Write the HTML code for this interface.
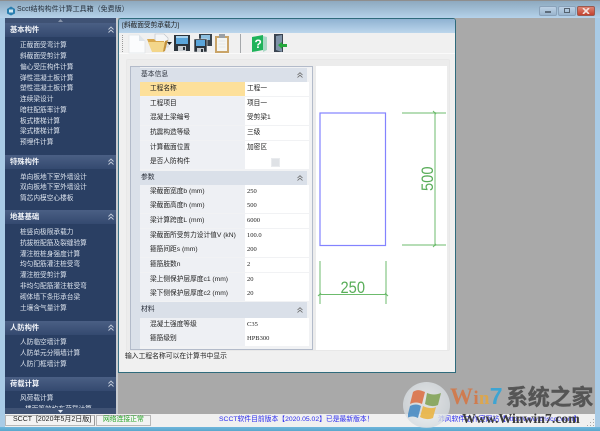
<!DOCTYPE html>
<html><head><meta charset="utf-8">
<style>
html,body{margin:0;padding:0;background:#a9cbe6}
body{width:600px;height:431px;position:relative;overflow:hidden;font-family:"Liberation Sans","Noto Sans CJK SC",sans-serif;}
#w{left:0;top:0;width:600px;height:431px;overflow:hidden;background:#a9cbe6;filter:blur(.3px)}
div{position:absolute;box-sizing:border-box}
.t{white-space:nowrap;line-height:10px;height:10px}
.s{color:#dde4ee;font-size:6.7px;left:20px}
.h{left:5px;width:111px;height:14px;background:linear-gradient(#4a5f84,#34496f);}
.h b{position:absolute;left:5px;top:2px;font-size:7.3px;line-height:10px;color:#f0f3f8;font-weight:bold}
.h svg{position:absolute;left:103px;top:3px}
.sec{left:131px;width:176px;height:14px;background:#dae0e9;}
.sec span{position:absolute;left:10px;top:2px;font-size:6.8px;line-height:10px;color:#2a2f3a}
.sec svg{position:absolute;left:166px;top:4px}
.r{left:140px;width:167px;height:14px;background:#eef0f4}
.r i{position:absolute;left:10px;top:2px;font-style:normal;font-size:6.7px;line-height:10px;color:#222;white-space:nowrap}
.r u{position:absolute;left:105px;top:0;width:62px;height:14px;background:#fff;text-decoration:none;font-size:6.7px;line-height:14px;color:#222;padding-left:2px;white-space:nowrap}
.r u.n{font-family:"Liberation Serif",serif;font-size:6.5px}
</style></head><body><div id="w">

<!-- main title bar -->
<div style="left:0;top:0;width:600px;height:18px;background:linear-gradient(#8ea9bf 0,#9cb9d0 40%,#b5d2ea 100%);border-top:1px solid #8e8e8e"></div>
<svg style="position:absolute;left:6px;top:6px" width="10" height="10" viewBox="0 0 10 10"><path d="M5 .5L9 3v4.500L5 9.500 1 7.500V3z" fill="#2a7fb0"/><path d="M3 3.500h4v3H3z" fill="#cfe6f2"/></svg>
<div class="t" style="left:17px;top:5px;font-size:7px;color:#26303c">Scct结构构件计算工具箱（免费版）</div>
<!-- window buttons -->
<div style="left:539px;top:6px;width:18px;height:10px;background:linear-gradient(#bdd2e6,#9ab5ce);border:1px solid #8aa2ba;border-radius:2px"></div>
<div style="left:545px;top:11px;width:6px;height:2px;background:#5d6c7c"></div>
<div style="left:558px;top:6px;width:18px;height:10px;background:linear-gradient(#bdd2e6,#9ab5ce);border:1px solid #8aa2ba;border-radius:2px"></div>
<div style="left:564px;top:8px;width:6px;height:5px;border:1px solid #55626f"></div>
<div style="left:577px;top:6px;width:18px;height:10px;background:linear-gradient(#dd8474,#c4422f);border:1px solid #9a5a50;border-radius:2px"></div>
<svg style="position:absolute;left:582px;top:8px" width="8" height="6"><path d="M1 0l6 6M7 0L1 6" stroke="#f4e4e0" stroke-width="1.600"/></svg>

<!-- MDI -->
<div style="left:5px;top:18px;width:590px;height:396px;background:#a9a9a9"></div>
<div style="left:116px;top:18px;width:2px;height:396px;background:#c9ccd0"></div>

<!-- sidebar -->
<div style="left:5px;top:18px;width:111px;height:396px;background:#2a3f63"></div>
<div style="left:5px;top:18px;width:111px;height:5px;background:#3f5274"></div>
<svg style="position:absolute;left:58px;top:19px" width="5" height="3"><path d="M0 3l2.500-3L5 3z" fill="#8794aa"/></svg>

<div class="h" style="top:23px"><b>基本构件</b><svg width="6" height="7"><path d="M.5 3.500L3 1l2.500 2.500M.5 6.500L3 4l2.500 2.500" fill="none" stroke="#c3ccda" stroke-width=".9"/></svg></div>
<div class="t s" style="top:41px">正截面受弯计算</div>
<div class="t s" style="top:52px">斜截面受剪计算</div>
<div class="t s" style="top:63px">偏心受压构件计算</div>
<div class="t s" style="top:74px">弹性混凝土板计算</div>
<div class="t s" style="top:84px">塑性混凝土板计算</div>
<div class="t s" style="top:95px">连续梁设计</div>
<div class="t s" style="top:106px">暗柱配筋率计算</div>
<div class="t s" style="top:117px">板式楼梯计算</div>
<div class="t s" style="top:127px">梁式楼梯计算</div>
<div class="t s" style="top:138px">预埋件计算</div>

<div class="h" style="top:155px"><b>特殊构件</b><svg width="6" height="7"><path d="M.5 3.500L3 1l2.500 2.500M.5 6.500L3 4l2.500 2.500" fill="none" stroke="#c3ccda" stroke-width=".9"/></svg></div>
<div class="t s" style="top:173px">单向板地下室外墙设计</div>
<div class="t s" style="top:183px">双向板地下室外墙设计</div>
<div class="t s" style="top:194px">筒芯内模空心楼板</div>

<div class="h" style="top:210px"><b>地基基础</b><svg width="6" height="7"><path d="M.5 3.500L3 1l2.500 2.500M.5 6.500L3 4l2.500 2.500" fill="none" stroke="#c3ccda" stroke-width=".9"/></svg></div>
<div class="t s" style="top:228px">桩竖向极限承载力</div>
<div class="t s" style="top:239px">抗拔桩配筋及裂缝验算</div>
<div class="t s" style="top:250px">灌注桩桩身强度计算</div>
<div class="t s" style="top:260px">均匀配筋灌注桩受弯</div>
<div class="t s" style="top:271px">灌注桩受剪计算</div>
<div class="t s" style="top:282px">非均匀配筋灌注桩受弯</div>
<div class="t s" style="top:293px">砌体墙下条形承台梁</div>
<div class="t s" style="top:304px">土壤含气量计算</div>

<div class="h" style="top:321px"><b>人防构件</b><svg width="6" height="7"><path d="M.5 3.500L3 1l2.500 2.500M.5 6.500L3 4l2.500 2.500" fill="none" stroke="#c3ccda" stroke-width=".9"/></svg></div>
<div class="t s" style="top:338px">人防临空墙计算</div>
<div class="t s" style="top:349px">人防单元分隔墙计算</div>
<div class="t s" style="top:360px">人防门框墙计算</div>

<div class="h" style="top:377px"><b>荷载计算</b><svg width="6" height="7"><path d="M.5 3.500L3 1l2.500 2.500M.5 6.500L3 4l2.500 2.500" fill="none" stroke="#c3ccda" stroke-width=".9"/></svg></div>
<div class="t s" style="top:394px">风荷载计算</div>
<div style="left:5px;top:404px;width:111px;height:4px;overflow:hidden"><div class="t s" style="top:1px">楼面等效均布荷载计算</div></div>
<div style="left:5px;top:408px;width:111px;height:6px;background:#3f5274"></div>
<svg style="position:absolute;left:58px;top:410px" width="5" height="3"><path d="M0 0l2.500 3L5 0z" fill="#dfe5ee"/></svg>

<!-- child window -->
<div style="left:118px;top:18px;width:338px;height:355px;background:#f0f0f0;border:1px solid #2f6b7c;border-left-color:#3d7386;border-radius:3px 3px 0 0"></div>
<div style="left:119px;top:19px;width:336px;height:14px;background:linear-gradient(#8fb2d2,#bcd6ec);border-radius:2px 2px 0 0"></div>
<div class="t" style="left:122px;top:21px;font-size:6.7px;color:#222">[斜截面受剪承载力]</div>
<div style="left:119px;top:33px;width:336px;height:21px;background:#f0f0f0"></div>
<div style="left:119px;top:53px;width:336px;height:1px;background:#fafafa"></div>

<!-- toolbar icons -->
<div style="left:122px;top:35px;width:1px;height:17px;border-left:1px dotted #9a9a9a"></div>
<svg style="position:absolute;left:127px;top:33px" width="20" height="21" viewBox="0 0 20 21"><path d="M2 2h10l6 6v12H2z" fill="#fbfcfd" stroke="#e0e4e8" stroke-width=".8"/><path d="M12 2v6h6z" fill="#dfe5ea"/></svg>
<svg style="position:absolute;left:146px;top:33px" width="26" height="20" viewBox="0 0 26 20"><path d="M9 1h9l4 4v9H9z" fill="#f4f6f8" stroke="#b9bfc5" stroke-width=".6"/><path d="M1 6h7l2 2h8v10H6z" fill="#d9a84c"/><path d="M2 9h17l-2 10H6z" fill="#f3d68a"/><path d="M19 8l3-1-3 11-2 1z" fill="#c2923e"/></svg>
<svg style="position:absolute;left:167px;top:42px" width="5" height="4"><path d="M0 0h5L2.500 3z" fill="#222"/></svg>
<svg style="position:absolute;left:174px;top:35px" width="16" height="16" viewBox="0 0 16 16"><path d="M0 0h16v16H0z" fill="#2c343c"/><path d="M2 1h12v8H2z" fill="#5aa5da"/><path d="M2 1h12v2H2z" fill="#a9d3ee"/><path d="M4 11h8v5H4z" fill="#c7ccd0"/><path d="M9 12h2v3H9z" fill="#2c343c"/></svg>
<svg style="position:absolute;left:194px;top:34px" width="18" height="18" viewBox="0 0 18 18"><path d="M5 0h13v12H5z" fill="#39434c"/><path d="M7 1h9v5H7z" fill="#8cbfe0"/><path d="M0 5h13v13H0z" fill="#2c343c" stroke="#eee" stroke-width=".6"/><path d="M2 6h9v6H2z" fill="#5aa5da"/><path d="M3 14h7v4H3z" fill="#c7ccd0"/><path d="M7 15h2v3H7z" fill="#2c343c"/></svg>
<svg style="position:absolute;left:215px;top:34px" width="14" height="19" viewBox="0 0 14 19"><path d="M0 2h14v17H0z" fill="#c9a468"/><path d="M2 4h10v13H2z" fill="#f4f5f2"/><path d="M4 0h6v4H4z" fill="#9aa0a6"/><path d="M3.500 7h7M3.500 10h7M3.500 13h7" stroke="#dfe2e2" stroke-width=".8"/></svg>
<div style="left:240px;top:34px;width:1px;height:19px;background:#a5a8ab"></div>
<svg style="position:absolute;left:251px;top:34px" width="17" height="19" viewBox="0 0 17 19"><path d="M12 2l4 1v13l-4 2z" fill="#a9d8c5"/><path d="M1 3l11-2v15L1 18z" fill="#1fb35a"/><text x="3.500" y="14" font-family="Liberation Sans" font-weight="bold" font-size="12" fill="#fff">?</text></svg>
<svg style="position:absolute;left:273px;top:34px" width="16" height="19" viewBox="0 0 16 19"><path d="M1 0h9v18H1z" fill="#3a4450"/><path d="M3 2l6-1v17l-6-2z" fill="#7f93a8"/><path d="M5 11l4-3v2h5v3H9v2z" fill="#25a83c"/></svg>

<!-- panels -->
<div style="left:126px;top:59px;width:324px;height:292px;background:#ececec;border:1px solid #e8e8e8;border-radius:2px"></div>
<div style="left:130px;top:66px;width:183px;height:284px;background:#f1f2f4;border:1px solid #b3bbca"></div>
<div style="left:131px;top:67px;width:9px;height:282px;background:#dae0e9"></div>
<div style="left:316px;top:66px;width:131px;height:284px;background:#fff"></div>

<!-- grid -->
<div class="sec" style="top:68px"><span>基本信息</span><svg width="6" height="6"><path d="M.5 3L3 .7 5.500 3M.5 5.500L3 3.200 5.500 5.500" fill="none" stroke="#666" stroke-width=".8"/></svg></div>
<div class="r" style="top:82px;background:#fde09a"><i>工程名称</i><u>工程一</u></div>
<div class="r" style="top:97px"><i>工程项目</i><u>项目一</u></div>
<div class="r" style="top:111px"><i>混凝土梁编号</i><u>受剪梁1</u></div>
<div class="r" style="top:126px"><i>抗震构造等级</i><u>三级</u></div>
<div class="r" style="top:141px"><i>计算截面位置</i><u>加密区</u></div>
<div class="r" style="top:155px"><i>是否人防构件</i><u></u></div>
<div style="left:271px;top:158px;width:9px;height:9px;background:#dfe2e6;border:1px solid #e9ebee"></div>
<div class="sec" style="top:171px"><span>参数</span><svg width="6" height="6"><path d="M.5 3L3 .7 5.500 3M.5 5.500L3 3.200 5.500 5.500" fill="none" stroke="#666" stroke-width=".8"/></svg></div>
<div class="r" style="top:185px"><i>梁截面宽度b (mm)</i><u class="n">250</u></div>
<div class="r" style="top:199px"><i>梁截面高度h (mm)</i><u class="n">500</u></div>
<div class="r" style="top:214px"><i>梁计算跨度L (mm)</i><u class="n">6000</u></div>
<div class="r" style="top:229px"><i>梁截面所受剪力设计值V (kN)</i><u class="n">100.0</u></div>
<div class="r" style="top:243px"><i>箍筋间距s (mm)</i><u class="n">200</u></div>
<div class="r" style="top:258px"><i>箍筋肢数n</i><u class="n">2</u></div>
<div class="r" style="top:273px"><i>梁上侧保护层厚度c1 (mm)</i><u class="n">20</u></div>
<div class="r" style="top:287px"><i>梁下侧保护层厚度c2 (mm)</i><u class="n">20</u></div>
<div class="sec" style="top:302px;height:16px"><span style="top:3px">材料</span><svg style="top:5px" width="6" height="6"><path d="M.5 3L3 .7 5.500 3M.5 5.500L3 3.200 5.500 5.500" fill="none" stroke="#666" stroke-width=".8"/></svg></div>
<div class="r" style="top:318px"><i>混凝土强度等级</i><u class="n">C35</u></div>
<div class="r" style="top:332px"><i>箍筋级别</i><u class="n">HPB300</u></div>
<div class="t" style="left:125px;top:352px;font-size:6.8px;color:#222">输入工程名称可以在计算书中显示</div>

<!-- drawing -->
<svg style="position:absolute;left:316px;top:66px" width="131" height="284" viewBox="316 66 131 284">
<rect x="320" y="113" width="65.500" height="132.500" fill="none" stroke="#8383ff" stroke-width="1.200"/>
<g stroke="#6cbb6c" stroke-width="1" fill="none">
<path d="M402 113h44M402 245h44M435 112v134"/>
<path d="M320 261v43M386 261v43M319 294.500h68"/>
<path d="M433 111l3 3M433 247l3-3M318 296l3-3M388 296l-3-3"/>
</g>
<text x="340.500" y="293" textLength="24.500" lengthAdjust="spacingAndGlyphs" font-family="Liberation Sans" font-size="17" fill="#59ad59">250</text>
<text transform="translate(433 191) rotate(-90)" textLength="24.500" lengthAdjust="spacingAndGlyphs" font-family="Liberation Sans" font-size="17" fill="#59ad59">500</text>
</svg>

<!-- status bar -->
<div style="left:0;top:414px;width:600px;height:13px;background:#f0f0f0"></div>
<div style="left:5px;top:415px;width:90px;height:11px;border:1px solid #b8b8b8;border-right-color:#999;background:#f3f3f3"></div>
<div style="left:96px;top:415px;width:55px;height:11px;border:1px solid #b8b8b8;background:#f3f3f3"></div>
<div class="t" style="left:13px;top:415px;font-size:7px;color:#222">SCCT&nbsp; [2020年5月2日版]</div>
<div class="t" style="left:103px;top:415px;font-size:6.800px;color:#2aa52a">网络连接正常</div>
<div class="t" style="left:219px;top:415px;font-size:6.800px;color:#2a2aee">SCCT软件目前版本【2020.05.02】已是最新版本！</div>
<div class="t" style="left:438px;top:415px;font-size:6.800px;color:#2a2aee">沛风软件工作室网站【http://www.bhscct.com】</div>
<div style="left:0;top:427px;width:600px;height:4px;background:linear-gradient(#6fb6dc,#5aa7cc)"></div>
<div style="left:0;top:18px;width:5px;height:409px;background:#a9cbe6"></div>
<div style="left:595px;top:18px;width:5px;height:409px;background:#a9cbe6"></div>
<svg style="position:absolute;left:586px;top:418px" width="9" height="9"><path d="M7 1h1v1H7zM4 4h1v1H4zM7 4h1v1H7zM1 7h1v1H1zM4 7h1v1H4zM7 7h1v1H7z" fill="#a8a8a8"/></svg>

<!-- watermark -->
<div style="left:403px;top:382px;width:47px;height:46px;border-radius:50%;background:radial-gradient(circle at 50% 40%,rgba(250,252,254,.7),rgba(200,208,214,.8))"></div>
<svg style="position:absolute;left:408px;top:387px;opacity:.9" width="37" height="34" viewBox="0 0 37 34">
<path d="M5 5c4-3 7-2 12 0l-3 12c-4-2-8-2-12 0z" fill="#dc7248"/>
<path d="M19 6c5 2 9 2 14 0l-3 12c-5 2-9 1-13-1z" fill="#84a458"/>
<path d="M2 19c4-2 8-2 11 0l-3 12c-4-2-7-2-11 0z" fill="#4a8cc4"/>
<path d="M15 19c4 2 9 3 13 1l-3 11c-5 2-9 1-13-1z" fill="#eab545"/>
</svg>
<div class="t" style="left:450px;top:385px;font-size:23px;line-height:22px;height:22px;font-family:'Liberation Serif',serif;font-weight:bold;letter-spacing:.3px"><span style="color:#cf7c50">W</span><span style="color:#cf7c50;font-size:19px">i</span><span style="color:#dca64e;font-size:19px">n</span><span style="color:#3ea4d2;font-family:'Liberation Sans'">7</span></div>
<div class="t" style="left:506px;top:384px;font-size:22px;line-height:24px;height:24px;font-weight:bold;color:#555;letter-spacing:-.2px;-webkit-text-stroke:.4px #555;font-family:'Noto Sans CJK SC',sans-serif">系统之家</div>
<div class="t" style="left:462px;top:411px;font-size:13.800px;line-height:15px;height:15px;font-family:'Liberation Serif',serif;font-weight:bold;color:#3c3c3c">Www.Winwin7.com</div>
</div></body></html>
